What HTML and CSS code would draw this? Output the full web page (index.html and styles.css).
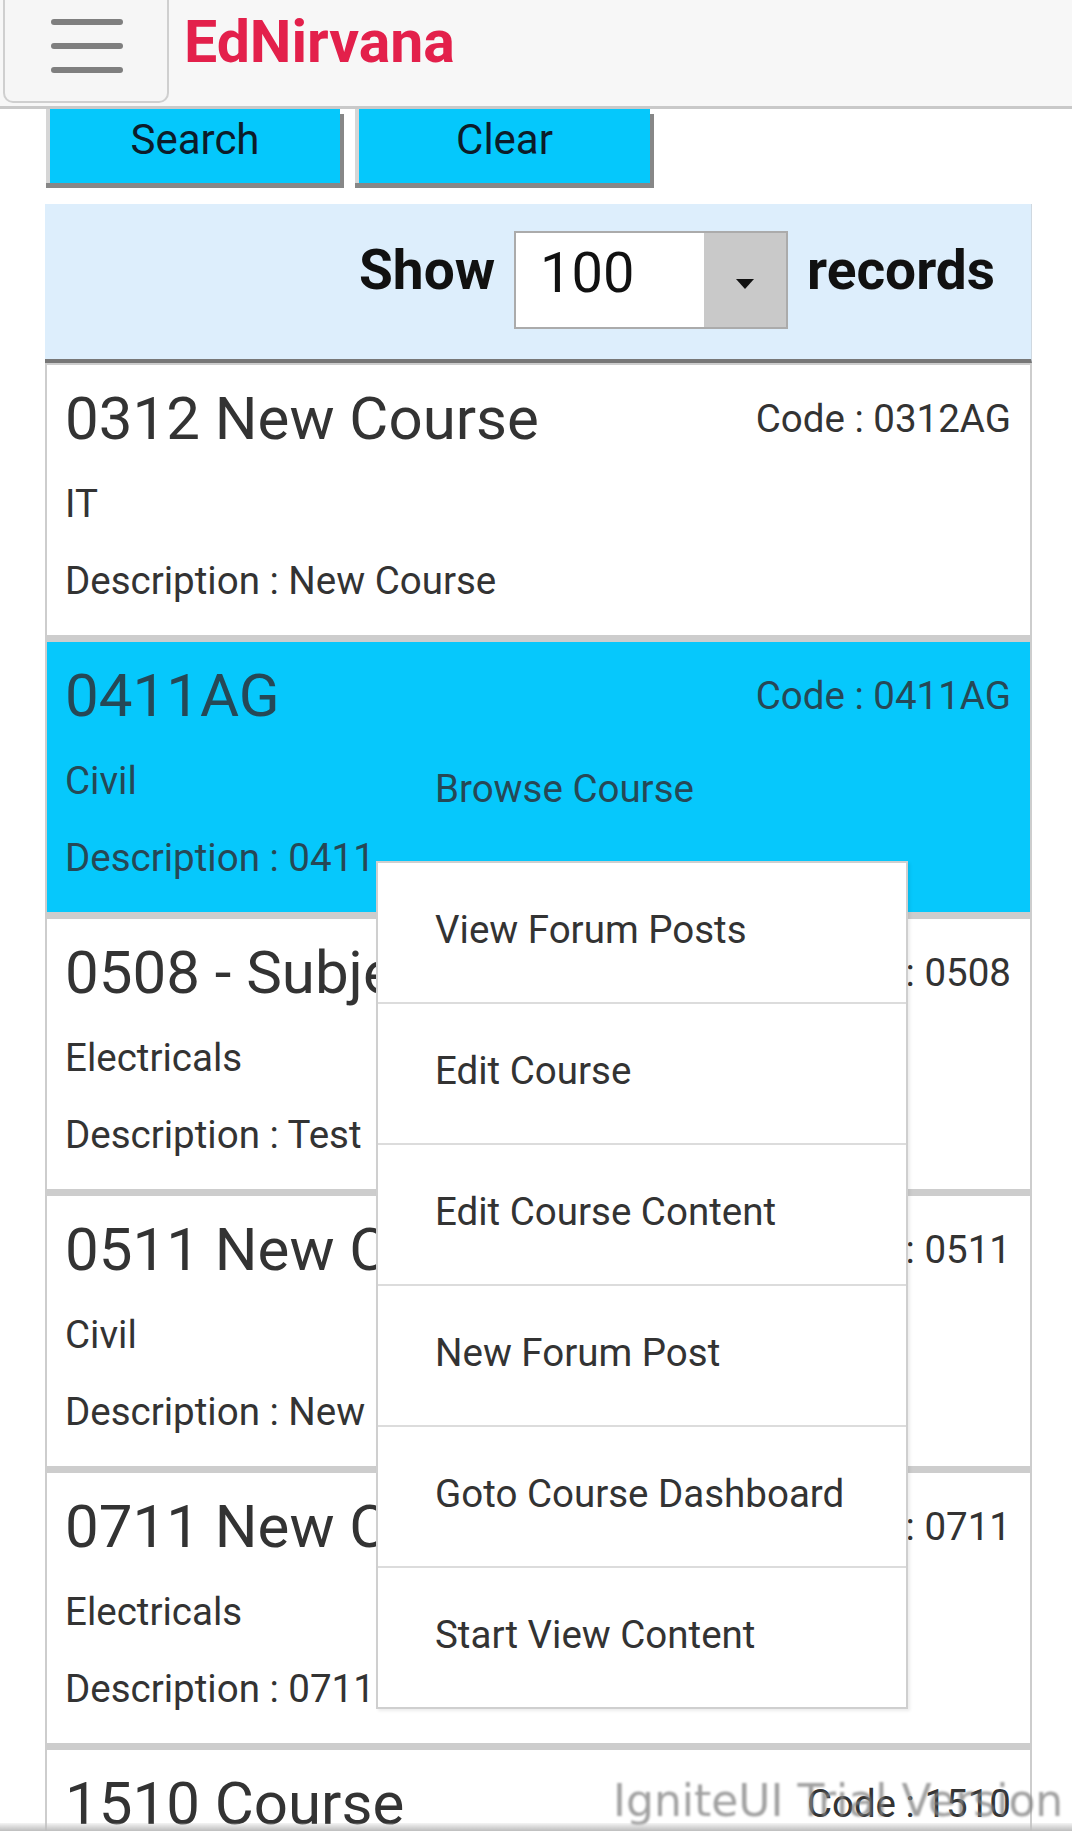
FILE: index.html
```html
<!DOCTYPE html>
<html lang="en">
<head>
<meta charset="utf-8">
<title>EdNirvana - Courses</title>
<link rel="stylesheet" href="styles.css">
</head>
<body>
<header class="topbar">
  <button class="menu-btn" aria-label="Menu"><span></span><span></span><span></span></button>
  <div class="brand">EdNirvana</div>
</header>
<main class="content">
  <div class="actions">
    <button class="btn btn-search">Search</button>
    <button class="btn btn-clear">Clear</button>
  </div>
  <div class="pager">
    <span class="pager-label">Show</span>
    <div class="select"><span class="select-value">100</span><span class="select-arrow"><span class="tri"></span></span></div>
    <span class="pager-label">records</span>
  </div>
  <ul class="course-list">
    <li class="course">
      <div class="course-head"><h2 class="course-title">0312 New Course</h2><p class="course-code">Code : 0312AG</p></div>
      <p class="course-cat">IT</p>
      <p class="course-desc">Description : New Course</p>
    </li>
    <li class="course active">
      <div class="course-head"><h2 class="course-title">0411AG</h2><p class="course-code">Code : 0411AG</p></div>
      <p class="course-cat">Civil</p>
      <p class="course-desc">Description : 0411</p>
    </li>
    <li class="course">
      <div class="course-head"><h2 class="course-title">0508 - Subject</h2><p class="course-code">Code : 0508</p></div>
      <p class="course-cat">Electricals</p>
      <p class="course-desc">Description : Test</p>
    </li>
    <li class="course">
      <div class="course-head"><h2 class="course-title">0511 New Course</h2><p class="course-code">Code : 0511</p></div>
      <p class="course-cat">Civil</p>
      <p class="course-desc">Description : New Course</p>
    </li>
    <li class="course">
      <div class="course-head"><h2 class="course-title">0711 New Course</h2><p class="course-code">Code : 0711</p></div>
      <p class="course-cat">Electricals</p>
      <p class="course-desc">Description : 0711</p>
    </li>
    <li class="course">
      <div class="course-head"><h2 class="course-title">1510 Course</h2><p class="course-code">Code : 1510</p></div>
      <p class="course-cat">IT</p>
      <p class="course-desc">Description : 1510</p>
    </li>
  </ul>
</main>
<div class="popup">
  <div class="popup-item popup-first">Browse Course</div>
  <ul class="popup-list">
    <li class="popup-item">View Forum Posts</li>
    <li class="popup-item">Edit Course</li>
    <li class="popup-item">Edit Course Content</li>
    <li class="popup-item">New Forum Post</li>
    <li class="popup-item">Goto Course Dashboard</li>
    <li class="popup-item">Start View Content</li>
  </ul>
</div>
<div class="watermark">IgniteUI Trial Version</div>
<div class="bottom-shade"></div>
</body>
</html>
```

FILE: styles.css
```css
html, body {
  margin: 0;
  padding: 0;
  height: 1831px;
  overflow: hidden;
  background: #ffffff;
  font-family: Roboto, "Noto Sans", Arial, sans-serif;
  color: #333333;
}

.topbar {
  display: flex;
  align-items: flex-start;
  height: 106px;
  background: #f7f7f7;
  border-bottom: 3px solid #c9c9c9;
  position: relative;
  z-index: 5;
}

.menu-btn {
  margin: 0 0 0 3px;
  width: 166px;
  height: 103px;
  padding: 19px 0 0 46px;
  box-sizing: border-box;
  background: #f6f6f6;
  border: 2px solid #cfcfcf;
  border-top: none;
  border-radius: 0 0 10px 10px;
  display: flex;
  flex-direction: column;
  align-items: flex-start;
  gap: 18px;
}

.menu-btn span {
  display: block;
  width: 72px;
  height: 6px;
  border-radius: 3px;
  background: #7f7f7f;
}

.brand {
  margin: 7px 0 0 15px;
  font-size: 59px;
  line-height: 70px;
  font-weight: 700;
  color: #e3204b;
}

.content {
  padding-left: 45px;
  width: 987px;
}

.actions {
  display: flex;
  gap: 15px;
  padding-left: 1px;
}

.btn {
  height: 74px;
  margin: 0;
  padding: 0 0 12px;
  box-sizing: border-box;
  border: none;
  border-left: 4px solid #d6d6d6;
  background: #05c8fc;
  color: #0c1c2a;
  font-family: Roboto, Arial, sans-serif;
  font-size: 42px;
  line-height: 48px;
  text-align: center;
  box-shadow: 0 5px 0 #878787, 4px 5px 0 #878787;
}

.btn-search { width: 294px; }
.btn-clear { width: 295px; }

.pager {
  margin-top: 21px;
  height: 159px;
  box-sizing: border-box;
  background: #ddeefc;
  border-bottom: 4px solid #777777;
  border-right: 1px solid #cfd8e0;
  display: flex;
  justify-content: flex-end;
  align-items: center;
  gap: 19px;
  padding: 0 36px 14px 0;
}

.pager-label {
  font-size: 55px;
  font-weight: 700;
  color: #111111;
  line-height: 64px;
  padding-bottom: 10px;
}

.select {
  width: 274px;
  height: 98px;
  box-sizing: border-box;
  border: 2px solid #ababab;
  background: #ffffff;
  display: flex;
  align-items: stretch;
  margin-top: 10px;
}

.select-value {
  flex: 1;
  padding-left: 24px;
  font-size: 56px;
  line-height: 80px;
  color: #111111;
}

.select-arrow {
  width: 82px;
  background: #c9c9c9;
  display: flex;
  align-items: center;
  justify-content: center;
}

.tri {
  width: 0;
  height: 0;
  border-left: 9px solid transparent;
  border-right: 9px solid transparent;
  border-top: 10px solid #111111;
  margin-top: 8px;
}

.course-list {
  list-style: none;
  margin: 0;
  padding: 2px 2px 0;
  background: #cdcdcd;
  display: flex;
  flex-direction: column;
  gap: 7px;
}

.course {
  height: 270px;
  box-sizing: border-box;
  padding: 18px 19px 0 18px;
  background: #ffffff;
  color: #333333;
}

.course.active {
  background: #06c8fc;
  color: #264856;
}

.course-head {
  display: flex;
  justify-content: space-between;
  align-items: flex-start;
}

.course-title {
  margin: 0;
  font-size: 60px;
  line-height: 72px;
  font-weight: 400;
  white-space: nowrap;
}

.course-code {
  margin: 13px 0 0;
  font-size: 38.5px;
  line-height: 46px;
  white-space: nowrap;
}

.course-cat {
  margin: 26px 0 0;
  font-size: 38.5px;
  line-height: 46px;
}

.course-desc {
  margin: 31px 0 0;
  font-size: 38.5px;
  line-height: 46px;
  white-space: nowrap;
}

.popup {
  position: absolute;
  top: 720px;
  left: 376px;
  width: 532px;
  z-index: 10;
}

.popup-item {
  height: 141px;
  box-sizing: border-box;
  padding: 44px 0 0 57px;
  font-size: 38.5px;
  line-height: 46px;
  color: #333333;
  white-space: nowrap;
}

.popup-first {
  padding: 46px 0 0 59px;
  color: #264856;
}

.popup-list {
  list-style: none;
  margin: 0;
  padding: 0;
  background: #ffffff;
  border: 2px solid #cfcfcf;
  box-shadow: 2px 2px 3px rgba(0, 0, 0, 0.08);
}

.popup-list .popup-item {
  height: 141px;
  border-top: 2px solid #dcdcdc;
}

.popup-list .popup-item:first-child {
  height: 139px;
  border-top: none;
}

.watermark {
  position: fixed;
  left: 613px;
  top: 1776px;
  font-family: "DejaVu Sans", Verdana, sans-serif;
  font-size: 44px;
  line-height: 50px;
  color: rgba(130, 130, 130, 0.75);
  filter: blur(0.8px);
  white-space: nowrap;
  z-index: 20;
  pointer-events: none;
}

.bottom-shade {
  position: fixed;
  left: 0;
  right: 0;
  bottom: 0;
  height: 8px;
  background: linear-gradient(to bottom, rgba(200, 200, 200, 0.2), #bdbdbd);
  z-index: 21;
}
```
